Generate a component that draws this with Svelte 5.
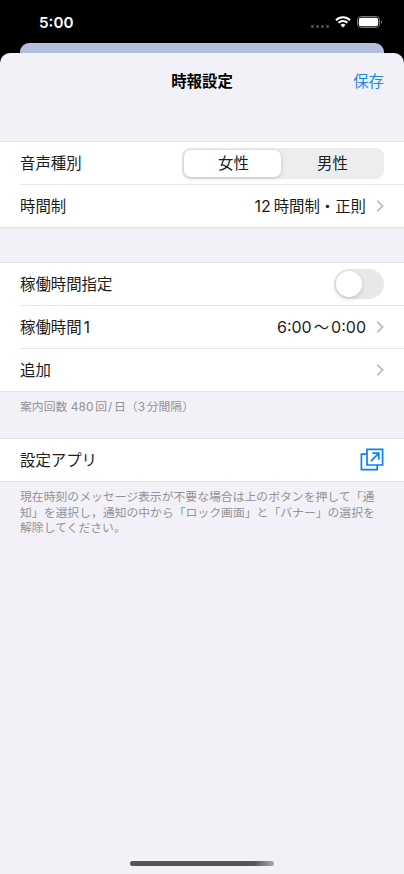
<script lang="ts">
  let voz = $state('女性');
  let activo = $state(false);

  const voces = ['女性', '男性'];
  const nota = [
    '現在時刻のメッセージ表示が不要な場合は上のボタンを押して「通',
    '知」を選択し，通知の中から「ロック画面」と「バナー」の選択を',
    '解除してください。'
  ];
</script>

{#snippet chevron()}
  <svg class="chevron" width="8" height="14" viewBox="0 0 8 14">
    <path d="M1.2 1.6 6.6 7 1.2 12.4" />
  </svg>
{/snippet}

<div class="screen">
  <header class="status">
    <span class="clock">5:00</span>
    <div class="status-icons">
      <div class="dots"><i></i><i></i><i></i><i></i></div>
      <svg class="wifi" width="16" height="12" viewBox="0 0 16 12">
        <path d="M1 4.2a10 10 0 0 1 14 0" />
        <path d="M3.5 6.8a6.4 6.4 0 0 1 9 0" />
        <path class="fill" d="M5.5 9a3.6 3.6 0 0 1 5 0L8 11.6Z" />
      </svg>
      <svg width="26" height="12" viewBox="0 0 26 12">
        <rect x="0.5" y="0.5" width="22" height="11" rx="3.4" fill="none" stroke="#757575" />
        <rect x="1.8" y="1.8" width="19.4" height="8.4" rx="2.2" fill="#fff" />
        <path d="M24 4.2c1.6.5 1.6 3.1 0 3.6Z" fill="#757575" />
      </svg>
    </div>
  </header>
  <div class="behind"></div>

  <main class="sheet">
    <nav>
      <h1>時報設定</h1>
      <button class="save">保存</button>
    </nav>

    <section class="group">
      <div class="row">
        <span>音声種別</span>
        <div class="segmented">
          {#each voces as v}
            <button class:selected={voz === v} onclick={() => (voz = v)}>{v}</button>
          {/each}
        </div>
      </div>
      <div class="row">
        <span>時間制</span>
        <span class="value mode"><b>12</b>時間制・正則</span>
        {@render chevron()}
      </div>
    </section>

    <section class="group second">
      <div class="row">
        <span>稼働時間指定</span>
        <button class="switch" class:on={activo} aria-label="稼働時間指定" onclick={() => (activo = !activo)}>
          <span class="knob"></span>
        </button>
      </div>
      <div class="row">
        <span>稼働時間<b class="index">1</b></span>
        <span class="value hours"><b>6:00</b>～<b>0:00</b></span>
        {@render chevron()}
      </div>
      <div class="row">
        <span>追加</span>
        {@render chevron()}
      </div>
    </section>
    <p class="count">案内回数 <b>480</b>回<b class="slash">/</b>日（<b>3</b>分間隔）</p>

    <section class="group">
      <div class="row">
        <span>設定アプリ</span>
        <svg class="open" width="24" height="24" viewBox="0 0 24 24">
          <path d="M7 6.2H1.4v15.4h15.8V17" />
          <path d="M7 1.4h15.6V17H7Z" />
          <path d="M11 13.2 18.6 5.4M12.4 5.2h6.4v6.6" />
        </svg>
      </div>
    </section>
    <p class="note">
      {#each nota as linea}
        <span>{linea}</span>
      {/each}
    </p>

    <div class="home"></div>
  </main>
</div>

<style>
  :global(body) {
    background: #000;
  }

  .screen {
    display: flex;
    flex-direction: column;
    width: 404px;
    height: 874px;
    overflow: hidden;
    background: #000;
    color: #1c1c1c;
    font-family: Inter, "Noto Sans CJK JP", sans-serif;
    font-size: 15.4px;
  }

  button {
    border: 0;
    padding: 0;
    background: none;
    color: inherit;
    font: inherit;
  }

  b {
    font-weight: 400;
  }

  .status {
    display: flex;
    justify-content: space-between;
    box-sizing: border-box;
    height: 43px;
    padding: 12px 21px 0 39px;
  }

  .clock {
    color: #fff;
    font-size: 15.2px;
    font-weight: 600;
    line-height: 21px;
  }

  .status-icons {
    display: flex;
    align-items: flex-start;
    padding-top: 4px;
  }

  .dots {
    display: flex;
    gap: 2px;
    margin: 9px 6px 0 0;
  }

  .dots i {
    width: 3px;
    height: 3px;
    border-radius: 1px;
    background: #484848;
  }

  .wifi {
    margin-right: 6px;
    fill: none;
    stroke: #fff;
    stroke-width: 2;
  }

  .wifi .fill {
    fill: #fff;
    stroke: none;
  }

  .behind {
    height: 10px;
    margin: 0 20px;
    border-radius: 9px 9px 0 0;
    background: #b3bee0;
  }

  .sheet {
    display: flex;
    flex: 1;
    flex-direction: column;
    border-radius: 10px 10px 0 0;
    background: #f2f1f7;
  }

  nav {
    display: grid;
    grid-template-columns: 1fr auto 1fr;
    align-items: center;
    height: 53px;
    margin-bottom: 35px;
    padding: 0 20px;
  }

  h1 {
    grid-column: 2;
    margin: 0;
    color: #000;
    font-size: 15.4px;
    font-weight: 700;
  }

  .save {
    justify-self: end;
    color: #1a86f2;
  }

  .group {
    border-top: 1px solid #e2e1e6;
    border-bottom: 1px solid #e2e1e6;
    background: #fff;
  }

  .second {
    margin-top: 34px;
  }

  .row {
    display: flex;
    align-items: center;
    box-sizing: border-box;
    height: 42px;
    margin-left: 20px;
    padding-right: 20px;
    white-space: nowrap;
  }

  .row + .row {
    height: 43px;
    border-top: 1px solid #e5e5e8;
  }

  .row > span {
    padding-bottom: 2px;
  }

  .row > :last-child {
    margin-left: auto;
  }

  .row > .value {
    margin-left: auto;
  }

  .row > .value + .chevron {
    margin-left: 10px;
  }

  .mode b {
    margin-right: 3px;
    font-size: 16px;
  }

  .index {
    margin-left: 2px;
    font-size: 16px;
  }

  .hours b {
    font-size: 16px;
  }

  .hours b:first-child {
    margin-right: 2px;
  }

  .hours b:last-child {
    margin-left: 2px;
  }

  .chevron {
    fill: none;
    stroke: #bdbdc0;
    stroke-width: 1.8;
  }

  .segmented {
    display: grid;
    grid-template-columns: 97px 1fr;
    box-sizing: border-box;
    width: 202px;
    height: 31px;
    padding: 2px;
    border-radius: 8px;
    background: #ededee;
  }

  .segmented button {
    border-radius: 7px;
    padding-left: 2px;
    line-height: 27px;
  }

  .segmented .selected {
    background: #fff;
    box-shadow: 0 1px 4px rgba(0, 0, 0, 0.2);
  }

  .switch {
    display: flex;
    box-sizing: border-box;
    width: 50px;
    height: 30px;
    padding: 2px;
    border-radius: 15px;
    background: #e8e8ea;
  }

  .switch.on {
    justify-content: flex-end;
    background: #34c759;
  }

  .knob {
    width: 26px;
    height: 26px;
    border-radius: 50%;
    background: #fff;
    box-shadow: 0 2px 5px rgba(0, 0, 0, 0.16);
  }

  .open {
    fill: none;
    stroke: #0a80f5;
    stroke-width: 1.7;
  }

  p {
    margin: 0;
    padding: 0 20px;
    color: #929297;
    font-size: 11.83px;
    white-space: nowrap;
  }

  .count {
    height: 39px;
    padding-top: 7px;
    line-height: 16px;
  }

  .count b {
    margin-right: 1.5px;
    letter-spacing: 0.2px;
  }

  .count .slash {
    margin-left: 1px;
  }

  .note {
    padding-top: 8px;
    line-height: 15.5px;
  }

  .note span {
    display: block;
  }

  .home {
    width: 144px;
    height: 5px;
    margin: auto auto 8px;
    border-radius: 3px;
    background: linear-gradient(90deg, #555 0 86%, #aaa);
  }
</style>
